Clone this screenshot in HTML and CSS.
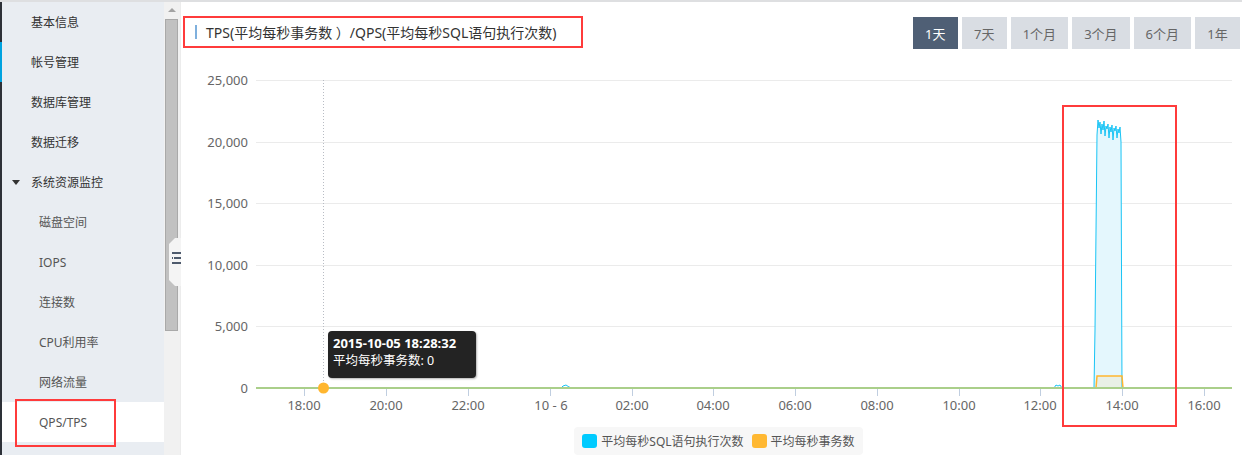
FILE: index.html
```html
<!DOCTYPE html>
<html lang="zh-CN">
<head>
<meta charset="utf-8">
<title>QPS/TPS</title>
<link rel="stylesheet" href="styles.css">
</head>
<body>
<div class="topline"></div>
<div class="layout">
  <nav class="sidebar">
    <div class="edge"><span class="edge-active"></span></div>
    <ul class="menu">
      <li class="item">基本信息</li>
      <li class="item">帐号管理</li>
      <li class="item">数据库管理</li>
      <li class="item">数据迁移</li>
      <li class="item group"><span class="caret"></span>系统资源监控</li>
      <li class="item sub">磁盘空间</li>
      <li class="item sub">IOPS</li>
      <li class="item sub">连接数</li>
      <li class="item sub">CPU利用率</li>
      <li class="item sub">网络流量</li>
      <li class="item sub active">QPS/TPS</li>
    </ul>
  </nav>
  <div class="scrollbar">
    <span class="scroll-up"></span>
    <span class="scroll-thumb"></span>
  </div>
  <main class="main">
    <header class="head">
      <h1 class="title"><span class="title-bar"></span>TPS(平均每秒事务数 ）/QPS(平均每秒SQL语句执行次数)</h1>
      <div class="ranges">
        <button class="range on">1天</button>
        <button class="range">7天</button>
        <button class="range">1个月</button>
        <button class="range">3个月</button>
        <button class="range">6个月</button>
        <button class="range">1年</button>
      </div>
    </header>
    <svg class="chart" width="1061" height="360" viewBox="181 64 1061 360" xmlns="http://www.w3.org/2000/svg">
      <g class="grid" stroke="#ebebeb" stroke-width="1">
        <line x1="256" y1="80.5" x2="1232" y2="80.5"/>
        <line x1="256" y1="142.5" x2="1232" y2="142.5"/>
        <line x1="256" y1="203.5" x2="1232" y2="203.5"/>
        <line x1="256" y1="265.5" x2="1232" y2="265.5"/>
        <line x1="256" y1="326.5" x2="1232" y2="326.5"/>
      </g>
      <g class="ylab" font-family="'Noto Sans', sans-serif" font-size="13" fill="#666" text-anchor="end">
        <text x="248" y="85">25,000</text>
        <text x="248" y="147">20,000</text>
        <text x="248" y="208">15,000</text>
        <text x="248" y="270">10,000</text>
        <text x="248" y="331">5,000</text>
        <text x="248" y="393">0</text>
      </g>
      <line x1="323.5" y1="80" x2="323.5" y2="388" stroke="#b8bcc4" stroke-width="1" stroke-dasharray="1,2"/>
      <g stroke="#c0cee0" stroke-width="1">
        <line x1="304.5" y1="389" x2="304.5" y2="396"/>
        <line x1="386.5" y1="389" x2="386.5" y2="396"/>
        <line x1="468.5" y1="389" x2="468.5" y2="396"/>
        <line x1="550.5" y1="389" x2="550.5" y2="396"/>
        <line x1="632.5" y1="389" x2="632.5" y2="396"/>
        <line x1="713.5" y1="389" x2="713.5" y2="396"/>
        <line x1="795.5" y1="389" x2="795.5" y2="396"/>
        <line x1="877.5" y1="389" x2="877.5" y2="396"/>
        <line x1="959.5" y1="389" x2="959.5" y2="396"/>
        <line x1="1040.5" y1="389" x2="1040.5" y2="396"/>
        <line x1="1122.5" y1="389" x2="1122.5" y2="396"/>
        <line x1="1204.5" y1="389" x2="1204.5" y2="396"/>
      </g>
      <g class="xlab" font-family="'Noto Sans', sans-serif" font-size="13" fill="#666" text-anchor="middle">
        <text x="304" y="410">18:00</text>
        <text x="386" y="410">20:00</text>
        <text x="468" y="410">22:00</text>
        <text x="551" y="410">10 - 6</text>
        <text x="632" y="410">02:00</text>
        <text x="713" y="410">04:00</text>
        <text x="795" y="410">06:00</text>
        <text x="877" y="410">08:00</text>
        <text x="959" y="410">10:00</text>
        <text x="1040" y="410">12:00</text>
        <text x="1122" y="410">14:00</text>
        <text x="1204" y="410">16:00</text>
      </g>
      <path d="M1094 388 L1095 330 L1097 135 L1098 120 L1099 128 L1100 122 L1101 134 L1102 124 L1103 130 L1104 121 L1105 136 L1106 126 L1107 129 L1108 124 L1109 138 L1110 127 L1111 132 L1112 125 L1113 140 L1114 128 L1115 131 L1116 126 L1117 138 L1118 129 L1119 133 L1120 127 L1121 142 L1122 388 Z" fill="#e4f7fd"/>
      <rect x="1097" y="376" width="25" height="12" fill="#e9f0e6"/>
      <path d="M256 388 L561 388 L563 386 L566 385 L569 387 L572 388 L1054 388 L1056 385 L1058 386 L1060 385 L1062 388 L1094 388 L1095 330 L1097 135 L1098 120 L1099 128 L1100 122 L1101 134 L1102 124 L1103 130 L1104 121 L1105 136 L1106 126 L1107 129 L1108 124 L1109 138 L1110 127 L1111 132 L1112 125 L1113 140 L1114 128 L1115 131 L1116 126 L1117 138 L1118 129 L1119 133 L1120 127 L1121 142 L1122 388" fill="none" stroke="#19c4f5" stroke-width="1"/>
      <path d="M1096 388 L1097 376 L1122 376 L1123 388" fill="none" stroke="#ffb62f" stroke-width="1.5"/>
      <line x1="256" y1="388" x2="1232" y2="388" stroke="#aacf8a" stroke-width="2"/>
      <circle cx="323.5" cy="388" r="5.5" fill="#ffb62f"/>
    </svg>
    <div class="legend">
      <span class="key"><i class="sw blue"></i>平均每秒SQL语句执行次数</span>
      <span class="key"><i class="sw orange"></i>平均每秒事务数</span>
    </div>
    <div class="tooltip">
      <div class="tip-time">2015-10-05 18:28:32</div>
      <div class="tip-val">平均每秒事务数: 0</div>
    </div>
    <div class="mark mark-spike"></div>
  </main>
</div>
<div class="mark mark-menu"></div>
<svg class="collapse" width="14" height="48" viewBox="0 0 14 48" xmlns="http://www.w3.org/2000/svg">
  <path d="M14 0 L14 48 L8 48 L2 42 L2 6 L8 0 Z" fill="#f4f4f4"/>
  <rect x="5" y="14" width="9" height="2" fill="#4d5a6c"/>
  <rect x="7" y="19" width="7" height="2" fill="#4d5a6c"/>
  <rect x="5" y="19" width="1" height="2" fill="#4d5a6c"/>
  <rect x="5" y="24" width="9" height="2" fill="#4d5a6c"/>
</svg>
</body>
</html>
```

FILE: styles.css
```css
* { box-sizing: border-box; }
html, body { margin: 0; padding: 0; }
body {
  width: 1242px;
  height: 455px;
  overflow: hidden;
  background: #fff;
  font-family: "Noto Sans", "Noto Sans CJK SC", sans-serif;
  color: #333;
  position: relative;
}
.topline { height: 2px; background: #dedfe1; }
.layout { display: flex; height: 453px; }

.sidebar { width: 165px; display: flex; background: #e9edf2; }
.edge { width: 2px; background: #2d3138; padding-top: 40px; }
.edge-active { display: block; height: 40px; background: #00a3e0; }
.menu { list-style: none; margin: 0; padding: 0; flex: 1; }
.item {
  height: 40px;
  display: flex;
  align-items: center;
  padding-left: 29px;
  font-size: 12px;
  color: #333;
  position: relative;
}
.item.sub { padding-left: 37px; color: #555; }
.item.active { background: #fff; }
.caret {
  position: absolute;
  left: 10px;
  top: 18px;
  width: 0; height: 0;
  border-left: 4px solid transparent;
  border-right: 4px solid transparent;
  border-top: 5px solid #333;
}

.scrollbar {
  width: 16px;
  background: #f1f1f1;
  display: flex;
  flex-direction: column;
  align-items: center;
  padding-top: 6px;
}
.scroll-up {
  width: 0; height: 0;
  border-left: 4px solid transparent;
  border-right: 4px solid transparent;
  border-bottom: 4px solid #a3a3a3;
  margin-bottom: 7px;
}
.scroll-thumb {
  width: 13px;
  height: 312px;
  background: #c1c1c1;
  border: 1px solid #a9a9a9;
  margin-left: -2px;
}

.main {
  flex: 1;
  border-left: 1px solid #ececec;
  position: relative;
  display: flex;
  flex-direction: column;
}
.head {
  height: 62px;
  display: flex;
  justify-content: space-between;
  align-items: flex-start;
  padding: 14px 2px 0 2px;
}
.title {
  margin: 0;
  height: 32px;
  width: 400px;
  border: 2px solid #ff3b3b;
  display: flex;
  align-items: center;
  padding-left: 10px;
  font-size: 14px;
  font-weight: normal;
  color: #333;
}
.title-bar {
  width: 2px;
  height: 14px;
  background: #7fb0dd;
  margin-right: 9px;
}
.ranges { display: flex; gap: 4px; margin-top: 1px; }
.range {
  border: 0;
  height: 32px;
  padding: 0 12px;
  min-width: 45px;
  font-family: "Noto Sans", "Noto Sans CJK SC", sans-serif;
  font-size: 13px;
  color: #666;
  background: #d9dde3;
}
.range.on { background: #4f5f75; color: #fff; }

.chart { display: block; }
.legend {
  align-self: center;
  margin-top: 3px;
  margin-left: 14px;
  height: 28px;
  padding: 0 8px;
  background: #f7f7f7;
  border-radius: 4px;
  display: flex;
  align-items: center;
  gap: 8px;
  font-size: 12px;
  color: #555;
}
.key { display: flex; align-items: center; }
.sw { width: 15px; height: 14px; border-radius: 3px; margin-right: 4px; display: inline-block; }
.sw.blue { background: #00cbff; }
.sw.orange { background: #ffb832; }

.tooltip {
  position: absolute;
  left: 147px;
  top: 329px;
  width: 148px;
  height: 47px;
  background: #232323;
  border-radius: 4px;
  box-shadow: 1px 1px 2px rgba(0,0,0,0.3);
  color: #fff;
  padding: 4px 5px;
  line-height: 17px;
}
.tip-time { font-size: 13px; font-weight: bold; }
.tip-val { font-size: 12.5px; }

.mark { position: absolute; border: 2px solid #ff3b3b; }
.mark-spike { left: 881px; top: 103px; width: 115px; height: 322px; }
.mark-menu { left: 15px; top: 399px; width: 101px; height: 48px; }
.collapse { position: absolute; left: 167px; top: 238px; }
```
